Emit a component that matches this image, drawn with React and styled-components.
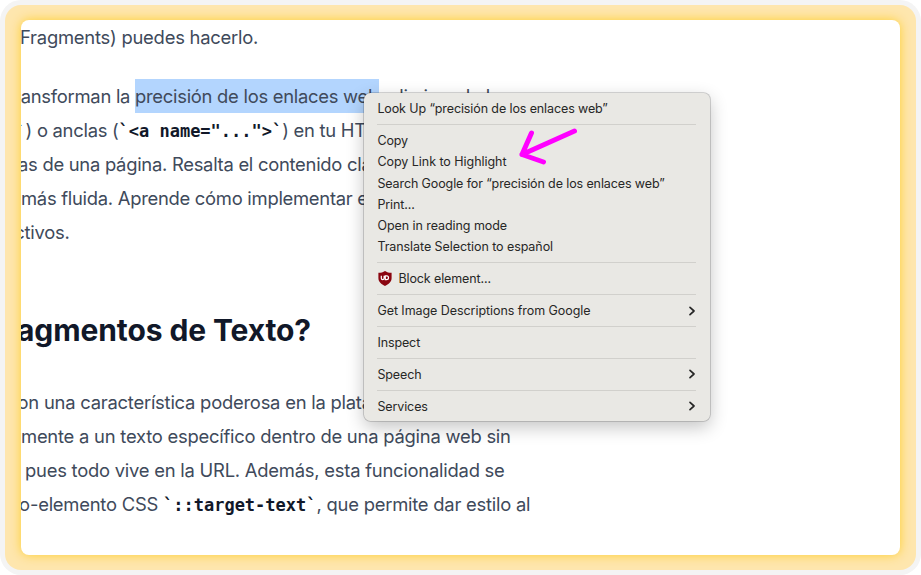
import React from 'react';
import styled, { createGlobalStyle } from 'styled-components';

const GlobalStyle = createGlobalStyle`
  *, *::before, *::after { box-sizing: border-box; }
  body { margin: 0; background: #fff; overflow: hidden; font-family: Inter, "Liberation Sans", sans-serif; }
`;

const Shell = styled.div`
  width: 921px;
  height: 575px;
  padding: 5px;
  border-radius: 21px;
  background: #f4f4f4;
`;

const Frame = styled.div`
  width: 911px;
  height: 565px;
  padding: 15px 16px;
  overflow: hidden;
  border-radius: 16px;
  background: #fee6ae;
`;

const Page = styled.main`
  position: relative;
  width: 879px;
  height: 535px;
  border-radius: 8px;
  background: #fff;
  box-shadow: 0 0 11px rgba(255, 206, 40, 0.95);
`;

const Article = styled.article`
  display: flex;
  flex-direction: column;
  width: 100%;
  height: 100%;
  overflow: hidden;
  border-radius: 8px;
`;

const Paragraph = styled.div`
  margin-top: ${(p) => p.$gap || 0}px;
  color: #404a5b;
  font-size: 18.4px;
  letter-spacing: ${(p) => p.$tracking ?? -0.27}px;
  line-height: 34px;
`;

const Line = styled.div`
  margin-left: ${(p) => p.$shift || 0}px;
  white-space: pre;
`;

const Heading = styled.h2`
  margin: 60.8px 0 0 -4px;
  color: #111829;
  font-size: 30px;
  font-weight: 700;
  letter-spacing: -0.1px;
  line-height: 40px;
  white-space: pre;
`;

const Selected = styled.mark`
  padding: 5.8px 0;
  color: inherit;
  background: #b3d5fe;
`;

const Code = styled.code`
  color: #111829;
  font: 700 17px/1 "DejaVu Sans Mono", monospace;
  letter-spacing: 0;
`;

const Menu = styled.div`
  position: absolute;
  left: 343px;
  top: 73px;
  width: 346px;
  height: 328px;
  padding: 5px 14px 0 13.4px;
  border-radius: 6.5px;
  background: #e9e8e4;
  box-shadow: 0 0 0 0.8px rgba(0, 0, 0, 0.2), 0 6px 18px rgba(0, 0, 0, 0.24);
`;

const MenuItem = styled.div`
  display: flex;
  align-items: center;
  height: 21.25px;
  color: #272726;
  font-size: 12.5px;
  letter-spacing: ${(p) => p.$tracking ?? -0.11}px;
  white-space: nowrap;

  svg:first-child { margin: 0 6.5px 0 0.5px; }
  svg:last-child { margin-left: auto; }
`;

const Separator = styled.div`
  height: 10.65px;
  display: flex;
  align-items: center;

  &::before {
    content: "";
    width: 100%;
    height: 1px;
    background: #d1d0cc;
  }
`;

const Arrow = styled.svg`
  position: absolute;
  left: 151px;
  top: 30px;
`;

const Chevron = () => (
  <svg width="8" height="10" viewBox="0 0 8 10" fill="none">
    <path d="M2 1.4 6 5 2 8.6" stroke="#272726" strokeWidth="1.7" strokeLinecap="round" strokeLinejoin="round" />
  </svg>
);

const Shield = () => (
  <svg width="14" height="15" viewBox="0 0 14 15" fill="none">
    <path d="M7 0C5.2 1.3 3 1.8.4 1.8V7c0 4 3 6.3 6.6 8 3.6-1.7 6.6-4 6.6-8V1.8C11 1.8 8.8 1.3 7 0Z" fill="#8a0510" />
    <path d="M3.3 4.8v2.4a1.4 1.4 0 0 0 2.8 0V4.8M7.3 4.8v3.8h1.3a1.9 1.9 0 0 0 0-3.8H7.3Z" stroke="#fff" strokeWidth="1.2" />
  </svg>
);

const menuGroups = [
  [{ label: 'Look Up “precisión de los enlaces web”' }],
  [
    { label: 'Copy' },
    { label: 'Copy Link to Highlight', tracking: -0.04 },
    { label: 'Search Google for “precisión de los enlaces web”' },
    { label: 'Print...' },
    { label: 'Open in reading mode', tracking: -0.06 },
    { label: 'Translate Selection to español', tracking: -0.07 },
  ],
  [{ label: 'Block element...', icon: true }],
  [{ label: 'Get Image Descriptions from Google', submenu: true, tracking: -0.06 }],
  [{ label: 'Inspect' }],
  [{ label: 'Speech', submenu: true }],
  [{ label: 'Services', submenu: true }],
];

export default function App() {
  return (
    <>
      <GlobalStyle />
      <Shell>
        <Frame>
          <Page>
            <Article>
              <Paragraph $tracking={-0.23}>
                <Line $shift={-1}>Fragments) puedes hacerlo.</Line>
              </Paragraph>
              <Paragraph $gap={25}>
                <Line $shift={-0.3}>ansforman la <Selected>precisión de los enlaces web</Selected>, eliminando la</Line>
                <Line $shift={-5.7}><Code>`</Code>) o anclas (<Code>{'`<a name="...">`'}</Code>) en tu HT</Line>
                <Line $shift={-3}>as de una página. Resalta el contenido cla</Line>
                <Line>más fluida. Aprende cómo implementar e</Line>
                <Line $shift={-6.7}>ctivos.</Line>
              </Paragraph>
              <Heading>agmentos de Texto?</Heading>
              <Paragraph $gap={35.2} $tracking={-0.23}>
                <Line $shift={-3.5}>on una característica poderosa en la plata</Line>
                <Line>mente a un texto específico dentro de una página web sin</Line>
                <Line $shift={4}>pues todo vive en la URL. Además, esta funcionalidad se</Line>
                <Line $shift={-1.9}>o-elemento CSS <Code>`::target-text`</Code>, que permite dar estilo al</Line>
              </Paragraph>
            </Article>
            <Menu>
              {menuGroups.map((group, index) => (
                <React.Fragment key={index}>
                  {index > 0 && <Separator />}
                  {group.map((item) => (
                    <MenuItem key={item.label} $tracking={item.tracking}>
                      {item.icon && <Shield />}
                      <span>{item.label}</span>
                      {item.submenu && <Chevron />}
                    </MenuItem>
                  ))}
                </React.Fragment>
              ))}
              <Arrow width="70" height="50" viewBox="0 0 70 50" fill="none">
                <path d="M59.5 8 7 31.5M16.5 10 7 31.5 28.5 39" stroke="#ff00ff" strokeWidth="5" strokeLinecap="round" strokeLinejoin="round" />
              </Arrow>
            </Menu>
          </Page>
        </Frame>
      </Shell>
    </>
  );
}
